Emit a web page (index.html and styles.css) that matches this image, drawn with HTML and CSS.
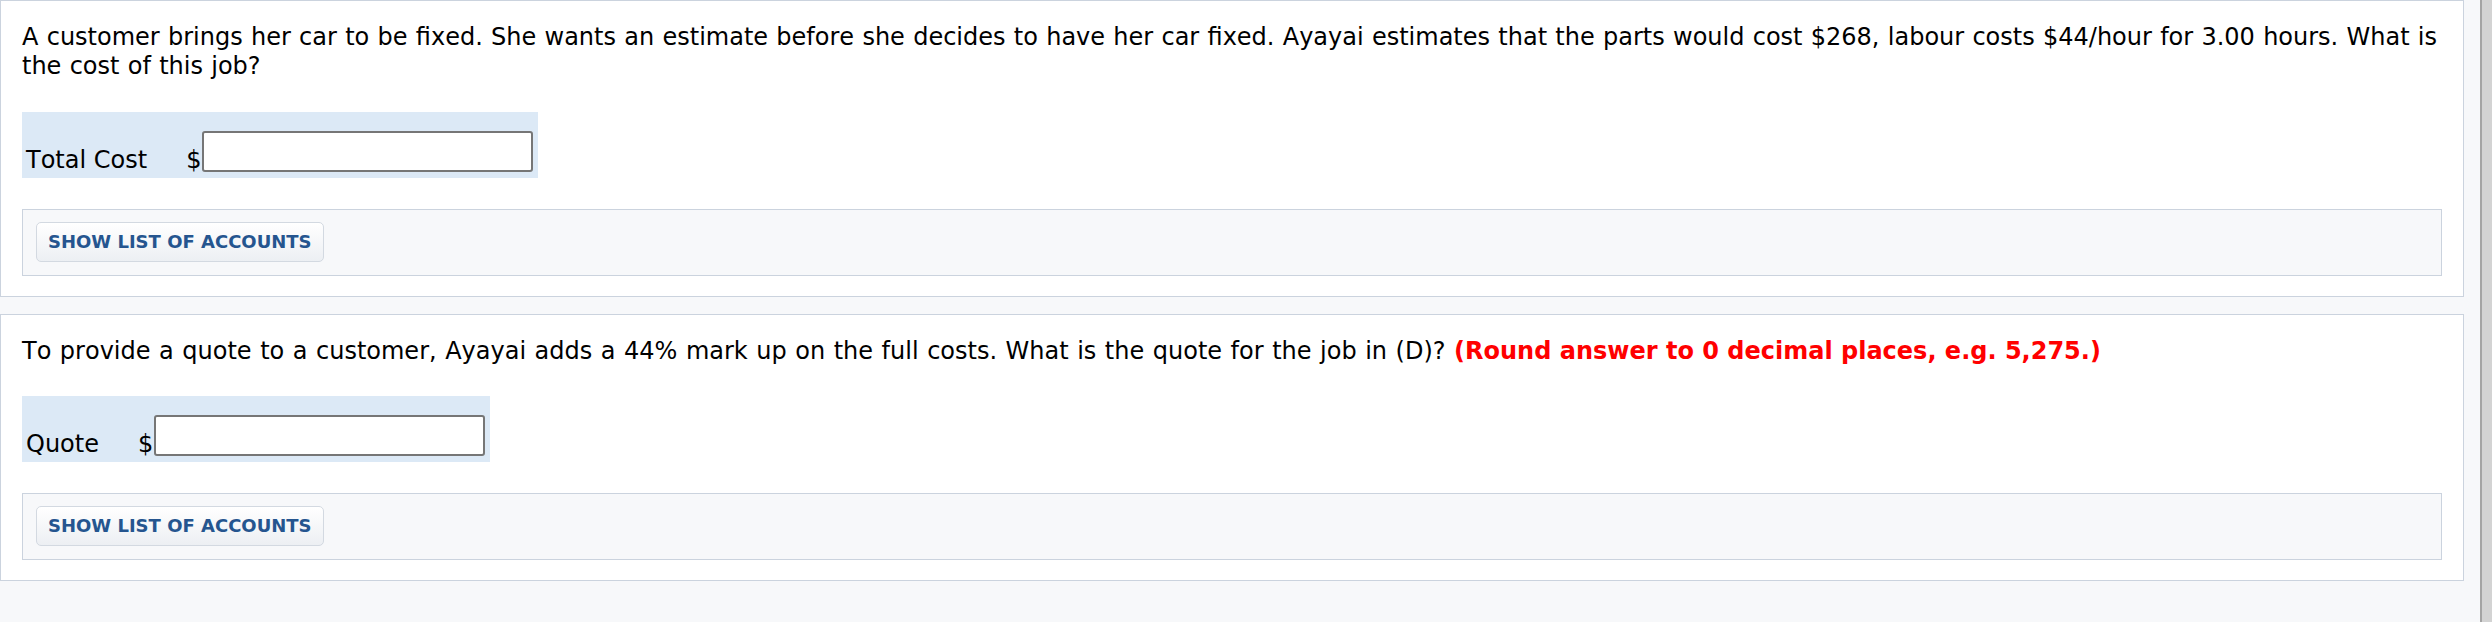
FILE: index.html
```html
<!DOCTYPE html>
<html lang="en">
<head>
<meta charset="utf-8">
<title>Cost estimate</title>
<link rel="stylesheet" href="styles.css">
</head>
<body>
<div class="page">
  <main class="content">
    <section class="panel">
      <p class="question">A customer brings her car to be fixed. She wants an estimate before she decides to have her car fixed. Ayayai estimates that the parts would cost $268, labour costs $44/hour for 3.00 hours. What is the cost of this job?</p>
      <div class="answer-row">
        <span class="label">Total Cost</span>
        <span class="cur">$</span>
        <input class="field" type="text" aria-label="Total Cost">
      </div>
      <div class="accounts">
        <button class="btn" type="button">SHOW LIST OF ACCOUNTS</button>
      </div>
    </section>
    <section class="panel">
      <p class="question question-wide">To provide a quote to a customer, Ayayai adds a 44% mark up on the full costs. What is the quote for the job in (D)? <strong class="hint">(Round answer to 0 decimal places, e.g. 5,275.)</strong></p>
      <div class="answer-row">
        <span class="label">Quote</span>
        <span class="cur">$</span>
        <input class="field" type="text" aria-label="Quote">
      </div>
      <div class="accounts">
        <button class="btn" type="button">SHOW LIST OF ACCOUNTS</button>
      </div>
    </section>
  </main>
  <div class="scrollbar"></div>
</div>
</body>
</html>
```
FILE: styles.css
```css
html, body {
  margin: 0;
  padding: 0;
  height: 100%;
}

body {
  background: #f7f8fa;
  font-family: "DejaVu Sans", Verdana, sans-serif;
  font-kerning: none;
  color: #000;
}

.page {
  display: flex;
  min-height: 622px;
}

.content {
  flex: 1;
  padding-right: 16px;
}

.panel {
  background: #fff;
  border: 1px solid #cbd3de;
  padding: 22px 21px 20px 21px;
}

.panel + .panel {
  margin-top: 17px;
}

.question {
  margin: 0 0 31px 0;
  font-size: 24px;
  line-height: 28.8px;
  word-spacing: 0.65px;
}

.question-wide {
  word-spacing: 0.9px;
}

.hint {
  color: #ff0000;
  font-weight: bold;
  word-spacing: 0;
}

.answer-row {
  display: inline-flex;
  align-items: flex-end;
  background: #dce9f6;
  padding: 19px 5px 6px 4px;
  font-size: 24px;
}

.label {
  line-height: 24px;
  margin-right: 39px;
}

.cur {
  line-height: 24px;
}

.field {
  box-sizing: border-box;
  width: 331px;
  height: 41px;
  margin: 0 0 0 1px;
  border: 2px solid #767676;
  border-radius: 3px;
  background: #fff;
  font-family: inherit;
  font-size: 20px;
  padding: 0 6px;
}

.accounts {
  margin-top: 31px;
  background: #f7f8fa;
  border: 1px solid #cbd3de;
  padding: 12px 13px 13px 13px;
}

.btn {
  display: block;
  box-sizing: border-box;
  height: 40px;
  padding: 8px 11px;
  border: 1px solid #d3d9e1;
  border-radius: 5px;
  background: linear-gradient(#ffffff, #eceff3);
  color: #25558f;
  font-family: "DejaVu Sans", Verdana, sans-serif;
  font-weight: bold;
  font-size: 18px;
  line-height: 22px;
}

.scrollbar {
  width: 10px;
  background: #d3d3d3;
  border-left: 2px solid #a4a4a4;
}
```
